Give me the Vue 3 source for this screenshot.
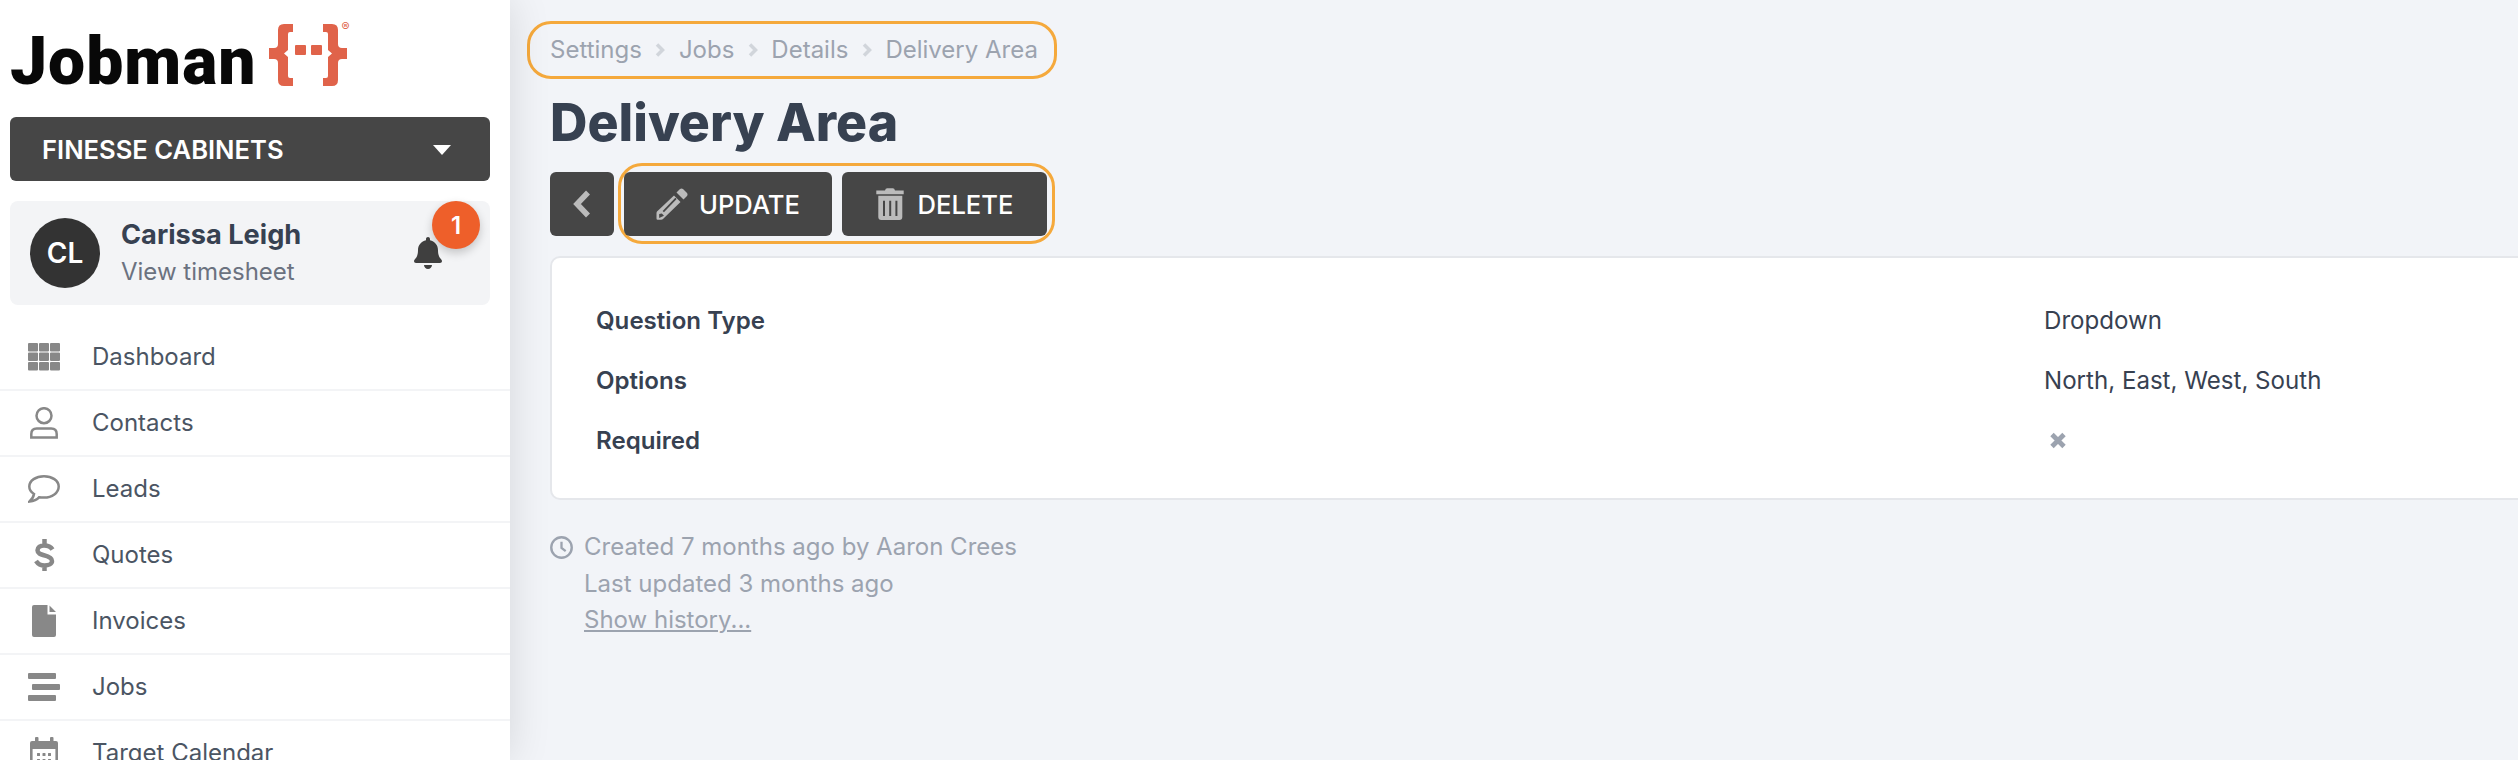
<template>
  <div class="app">
    <aside class="sidebar">
      <div class="logo">
        <span class="wordmark">Jobman</span>
        <svg class="braces" viewBox="268 12 84 76">
          <g fill="#e0634a">
            <path :d="bracePath" />
            <path :d="bracePath" transform="translate(616 0) scale(-1 1)" />
            <rect x="295" y="45" width="11" height="10" rx="1" />
            <rect x="311" y="45" width="11" height="10" rx="1" />
          </g>
          <text x="345.5" y="31" font-size="12" text-anchor="middle" font-family="Inter, sans-serif" fill="#e0634a">®</text>
        </svg>
      </div>

      <div class="company">
        <span>FINESSE CABINETS</span>
        <svg class="caret" viewBox="0 0 18 10"><path d="M0 0h18L9 10z" fill="#fff" /></svg>
      </div>

      <div class="user">
        <div class="avatar">CL</div>
        <div class="user-text">
          <div class="user-name">Carissa Leigh</div>
          <div class="user-link">View timesheet</div>
        </div>
        <svg class="bell" viewBox="0 0 448 512">
          <path fill="#3f3f3f" d="M224 512c35.32 0 63.97-28.65 63.97-64H160.03c0 35.35 28.65 64 63.97 64zm215.39-149.71c-19.32-20.76-55.47-51.99-55.47-154.29 0-77.7-54.48-139.9-127.94-155.16V32c0-17.67-14.32-32-31.98-32s-31.98 14.33-31.98 32v20.84C118.56 68.1 64.08 130.3 64.08 208c0 102.3-36.15 133.53-55.47 154.29-6 6.45-8.66 14.16-8.61 21.71.11 16.4 12.98 32 32.1 32h383.8c19.12 0 32-15.6 32.1-32 .05-7.55-2.61-15.27-8.61-21.71z" />
        </svg>
        <span class="badge">1</span>
      </div>

      <nav class="nav">
        <a v-for="item in navItems" :key="item.label" class="nav-item">
          <svg class="nav-icon" viewBox="0 0 32 32">
            <path v-if="item.fill" :d="item.fill" fill="#888" />
            <path v-if="item.stroke" :d="item.stroke" fill="none" stroke="#888" :stroke-width="item.width" />
          </svg>
          <span>{{ item.label }}</span>
        </a>
      </nav>
    </aside>

    <main class="main">
      <div class="crumbs">
        <template v-for="(crumb, i) in crumbs" :key="crumb">
          <svg v-if="i > 0" class="crumb-sep" viewBox="0 0 10 14"><path d="M2 1.500L7.500 7 2 12.500" fill="none" stroke="#d1d5db" stroke-width="3.500" /></svg>
          <span>{{ crumb }}</span>
        </template>
      </div>

      <h1 class="title">Delivery Area</h1>

      <div class="actions">
        <button class="btn btn-back">
          <svg viewBox="0 0 18 28" width="18" height="28"><path d="M15 2.500L4 14l11 11.500" fill="none" stroke="#bbb" stroke-width="5.500" /></svg>
        </button>
        <div class="action-group">
          <button class="btn btn-update">
            <svg viewBox="0 0 32 32" width="32" height="32">
              <path fill="#bbb" d="M20.500 4.500L24 1q1.500-1.200 3 0l4 4q1 1.500 0 3l-3.500 3.500z" />
              <path fill="#bbb" d="M18 7.500L24.500 14 7 31q-.5.700-2 .700H1.500q-1 0-1-1.200V25q0-1 .5-1.500z" />
              <path fill="none" stroke="#464646" stroke-width="1.800" d="M7.300 23.700L20 10.300" />
              <path fill="#464646" d="M3.200 30v-4l2.600-.5 2.200 2.200z" />
            </svg>
            UPDATE
          </button>
          <button class="btn btn-delete">
            <svg viewBox="0 0 28 32" width="28" height="32">
              <path fill="#bbb" d="M.3 2.500h8.700q.5-2.200 2.200-2.200h5.600q1.700 0 2.200 2.200h8.700V6.300H.3z" />
              <path fill="#bbb" d="M2.300 7.700h24V29q0 3-3 3h-18q-3 0-3-3z" />
              <path stroke="#464646" stroke-width="2" d="M8 12.700V28M14.200 12.700V28M20.400 12.700V28" />
            </svg>
            DELETE
          </button>
        </div>
      </div>

      <section class="card">
        <div v-for="row in details" :key="row.label" class="row">
          <div class="row-label">{{ row.label }}</div>
          <div class="row-value">
            <template v-if="row.value">{{ row.value }}</template>
            <svg v-else class="cross" viewBox="0 0 18 17"><path d="M3 2.500l12 12M15 2.500l-12 12" stroke="#9ca3af" stroke-width="4.800" /></svg>
          </div>
        </div>
      </section>

      <footer class="meta">
        <svg class="clock" viewBox="0 0 22 22"><circle cx="11" cy="11" r="9.800" fill="none" stroke="#9ca3af" stroke-width="2.300" /><path d="M11 5.500v6l4 3" fill="none" stroke="#9ca3af" stroke-width="2.200" /></svg>
        <div>
          <div>Created 7 months ago by Aaron Crees</div>
          <div>Last updated 3 months ago</div>
          <a class="history">Show history...</a>
        </div>
      </footer>
    </main>
  </div>
</template>

<script setup>
const bracePath = 'M293 24H284Q278 24 278 30V44Q278 48 274 48H269V59H274Q278 59 278 63V80Q278 86 284 86H293V78H290Q288 78 288 76V57L284 53.5L288 50V34Q288 32 290 32H293Z'

const tile = (x, y, w, h, r = 1) =>
  `M${x + r} ${y}h${w - 2 * r}q${r} 0 ${r} ${r}v${h - 2 * r}q0 ${r} -${r} ${r}h-${w - 2 * r}q-${r} 0 -${r} -${r}v-${h - 2 * r}q0 -${r} ${r} -${r}z`

const gridIcon = [2, 11.5, 21]
  .flatMap((y) => [0, 11, 22].map((x) => tile(x, y, 10, 8.5)))
  .join('')

const calendarIcon =
  tile(7, 0, 3.500, 6) + tile(22, 0, 3.500, 6) + tile(2, 4, 28, 8, 2) +
  [9, 14.500, 20].map((x) => tile(x, 16, 3, 3, 0.500)).join('') +
  [9, 14.500, 20].map((x) => tile(x, 22, 3, 3, 0.500)).join('')

const navItems = [
  { label: 'Dashboard', fill: gridIcon },
  {
    label: 'Contacts',
    stroke: 'M16 1.200a7.500 7.500 0 1 0 0 15a7.500 7.500 0 1 0 0-15zM3.300 30.500v-3.500q0-5.500 5.500-5.500h14.400q5.500 0 5.500 5.500v3.500z',
    width: 2.500
  },
  {
    label: 'Leads',
    stroke: 'M16 3.200C8 3.200 1.300 7.500 1.300 13.500C1.300 17 3.500 19.500 6 21C5.500 24 3.800 26.500 1.500 28.500C5.500 28 9 26.500 11 24.300C12.500 24.500 14.500 24.600 16 24.600C24 24.600 30.700 20 30.700 13.500C30.700 7.500 24 3.200 16 3.200Z',
    width: 2.500
  },
  {
    label: 'Quotes',
    stroke: 'M24.500 10.500C23 8 19.500 6.500 16 6.500C12 6.500 9.500 8.500 9.500 11.300C9.500 14.500 12.500 15.300 16 16.300C20 17.300 24 18.500 24 22C24 25 20.500 26.500 16.500 26.500C13 26.500 10 25 8 22M16.500 0v6.500M16.500 26v6',
    width: 4.500
  },
  {
    label: 'Invoices',
    fill: 'M6 0H19.500V9.500H28V30a2 2 0 0 1-2 2H6a2 2 0 0 1-2-2V2a2 2 0 0 1 2-2zM21.500 0.500L28 7H21.500z'
  },
  { label: 'Jobs', fill: tile(0, 2, 28, 6) + tile(4, 13, 28, 6) + tile(0, 24, 28, 6) },
  {
    label: 'Target Calendar',
    fill: calendarIcon,
    stroke: 'M3.300 8v22.700h25.400V8',
    width: 2.600
  }
]

const crumbs = ['Settings', 'Jobs', 'Details', 'Delivery Area']

const details = [
  { label: 'Question Type', value: 'Dropdown' },
  { label: 'Options', value: 'North, East, West, South' },
  { label: 'Required', value: '' }
]
</script>

<style scoped>
.app {
  display: flex;
  height: 760px;
  overflow: hidden;
  background: #f2f4f8;
  font-family: Inter, "Liberation Sans", sans-serif;
  font-size: 24px;
  color: #374151;
}

.sidebar {
  flex: 0 0 510px;
  height: 760px;
  background: #fff;
  box-shadow: 0 0 40px rgba(0, 0, 0, 0.12);
  z-index: 1;
  overflow: hidden;
}

.logo {
  display: flex;
  align-items: flex-start;
  height: 117px;
  padding-left: 10px;
}

.wordmark {
  width: 258px;
  margin-top: 22px;
  font-family: Roboto, sans-serif;
  font-weight: 900;
  font-size: 66px;
  line-height: 80px;
  letter-spacing: 1px;
  color: #080808;
}

.braces {
  width: 84px;
  height: 76px;
  margin-top: 12px;
}

.company {
  display: flex;
  align-items: center;
  justify-content: space-between;
  height: 64px;
  margin: 0 20px 0 10px;
  padding: 0 39px 0 32px;
  border-radius: 6px;
  background: #464646;
  color: #fff;
  font-size: 25.6px;
  font-weight: 600;
}

.caret {
  width: 18px;
  height: 10px;
  margin-top: 2px;
}

.user {
  position: relative;
  display: flex;
  align-items: center;
  height: 104px;
  margin: 20px 20px 20px 10px;
  padding-left: 20px;
  border-radius: 8px;
  background: #f3f4f6;
}

.avatar {
  display: flex;
  align-items: center;
  justify-content: center;
  width: 70px;
  height: 70px;
  border-radius: 50%;
  background: #333;
  color: #fff;
  font-size: 28px;
  font-weight: 600;
}

.user-text {
  margin-left: 21px;
}

.user-name {
  font-size: 27.2px;
  font-weight: 700;
  line-height: 38px;
}

.user-link {
  font-size: 24px;
  line-height: 36px;
  color: #6b7280;
}

.bell {
  width: 28px;
  height: 32px;
  margin-left: auto;
  margin-right: 48px;
}

.badge {
  position: absolute;
  top: 0;
  right: 10px;
  display: flex;
  align-items: center;
  justify-content: center;
  width: 48px;
  height: 48px;
  border-radius: 50%;
  background: #ee5f2a;
  color: #fff;
  font-size: 24px;
  font-weight: 600;
  box-shadow: 0 4px 10px rgba(0, 0, 0, 0.2);
}

.nav-item {
  display: flex;
  align-items: center;
  gap: 32px;
  height: 64px;
  padding-left: 28px;
  border-bottom: 2px solid #f3f4f6;
  color: #4b5563;
  line-height: 36px;
}

.nav-icon {
  width: 32px;
  height: 32px;
}

.main {
  flex: 1;
  min-width: 0;
  padding-left: 40px;
  overflow: hidden;
}

.crumbs {
  display: inline-flex;
  align-items: center;
  gap: 13.5px;
  margin: 21px 0 0 -23px;
  padding: 8px 16px 8px 20px;
  border: 3px solid #f5a93c;
  border-radius: 24px;
  color: #9ca3af;
  line-height: 36px;
}

.crumb-sep {
  width: 10px;
  height: 14px;
}

.title {
  margin: 13px 0 11px;
  font-size: 51.8px;
  font-weight: 800;
  line-height: 60px;
  color: #374151;
}

.actions {
  display: flex;
  align-items: flex-start;
}

.action-group {
  display: flex;
  gap: 10.5px;
  margin-left: 4px;
  padding: 6px 5.5px 5px 3px;
  border: 3px solid #f5a93c;
  border-radius: 24px;
}

.btn {
  display: flex;
  align-items: center;
  height: 64px;
  border: 0;
  border-radius: 6px;
  background: #464646;
  color: #fff;
  font: 500 25.6px Inter, "Liberation Sans", sans-serif;
}

.btn-back {
  justify-content: center;
  width: 64px;
  margin-top: 9px;
  padding: 0;
}

.btn-update {
  gap: 11px;
  padding: 0 32px;
}

.btn-delete {
  gap: 13px;
  padding: 0 33.5px 0 34px;
}

.card {
  margin: 12px -20px 0 0;
  padding: 32px 0 28px 44px;
  border: 2px solid #e5e7eb;
  border-radius: 10px;
  background: #fff;
  font-size: 24.1px;
}

.row {
  display: grid;
  grid-template-columns: 1448px 1fr;
  align-items: center;
  height: 60px;
}

.row-label {
  font-weight: 600;
}

.cross {
  display: block;
  width: 18px;
  height: 17px;
  margin-left: 5px;
}

.meta {
  display: flex;
  gap: 11px;
  margin-top: 29px;
  color: #9ca3af;
  line-height: 36.5px;
}

.clock {
  width: 23px;
  height: 23px;
  margin-top: 7px;
}

.history {
  text-decoration: underline;
}
</style>

<style>
html,
body {
  margin: 0;
  overflow: hidden;
  background: #f2f4f8;
}
</style>
